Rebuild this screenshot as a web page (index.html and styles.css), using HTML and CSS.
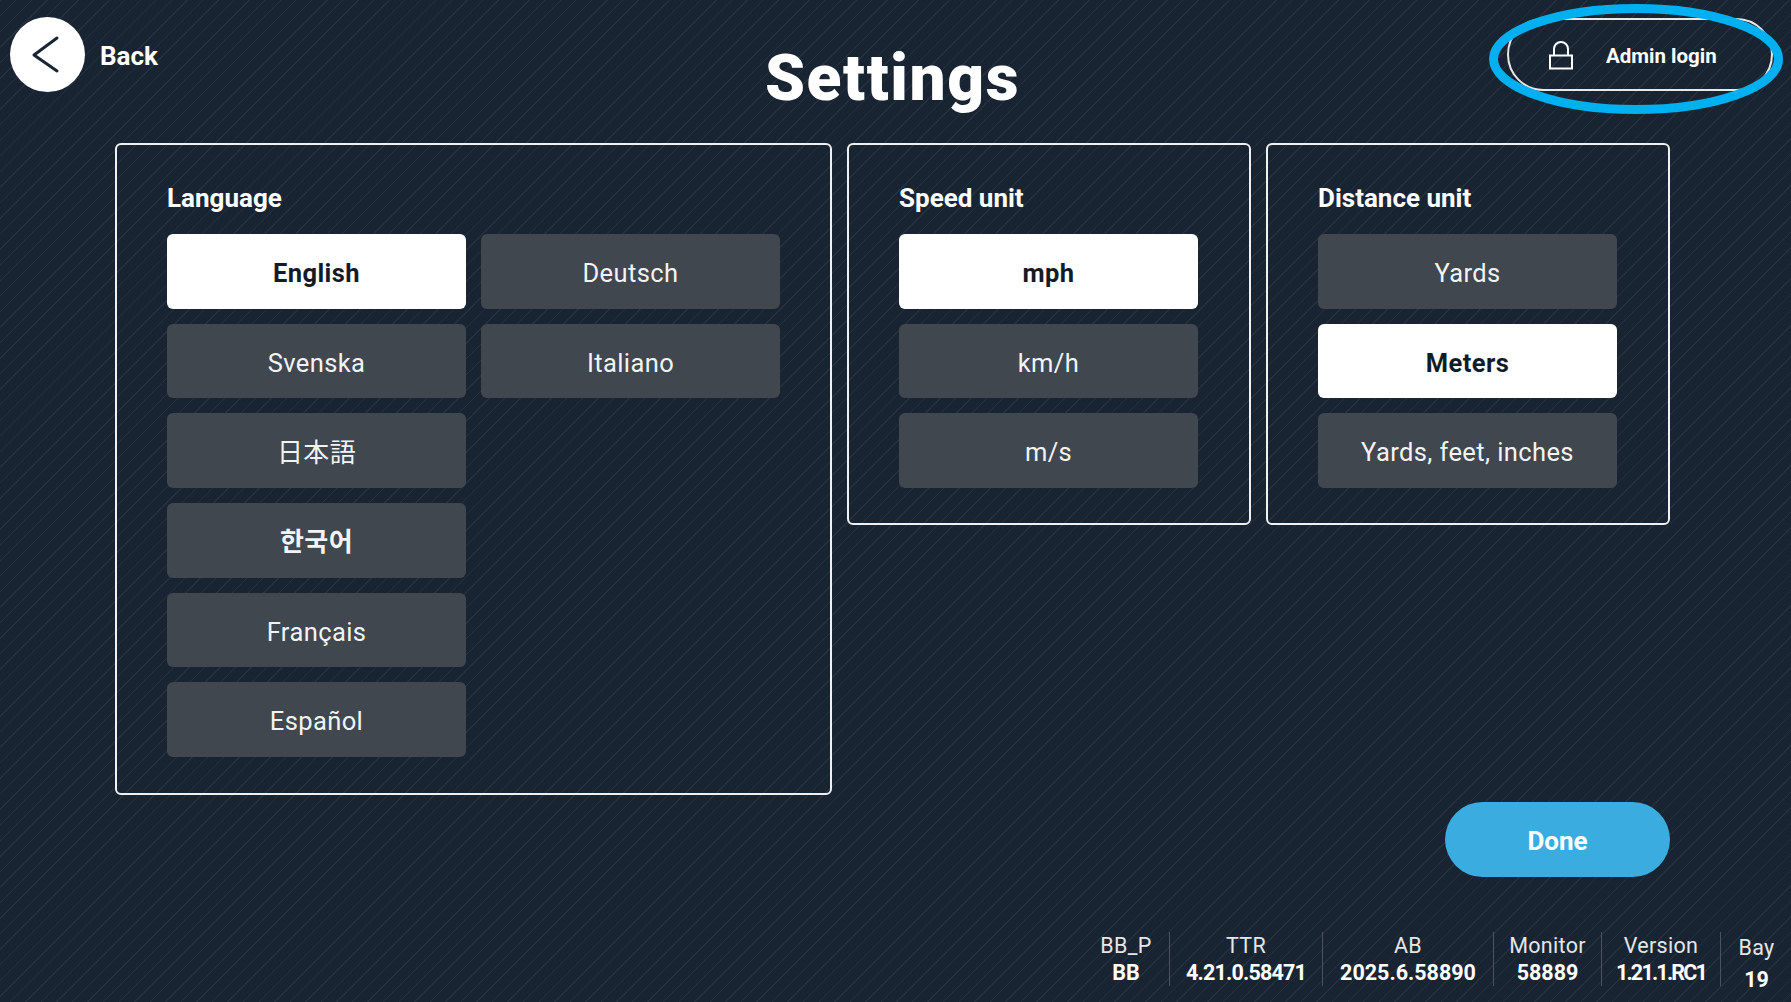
FILE: index.html
```html
<!DOCTYPE html>
<html lang="en">
<head>
<meta charset="utf-8">
<title>Settings</title>
<link rel="stylesheet" href="styles.css">
</head>
<body>
<div class="screen">
  <header class="top">
    <div class="back">
      <span class="back-circle">
        <svg width="75" height="75" viewBox="0 0 75 75"><path d="M47 21 L24 38 L47 54" fill="none" stroke="#1a2533" stroke-width="3" stroke-linecap="round" stroke-linejoin="round"/></svg>
      </span>
      <span class="back-label">Back</span>
    </div>
    <h1 class="title">Settings</h1>
    <div class="admin">
      <svg class="lock" width="26" height="30" viewBox="0 0 26 30"><path d="M6 15.5 V9 a7 7 0 0 1 14 0 V15.5" fill="none" stroke="#fff" stroke-width="2"/><rect x="2" y="15.5" width="22" height="13" fill="none" stroke="#fff" stroke-width="2"/></svg>
      <span class="admin-label">Admin login</span>
    </div>
  </header>
  <svg class="highlight" width="294" height="110" viewBox="0 0 294 110"><ellipse cx="147" cy="55" rx="142.5" ry="50.5" fill="none" stroke="#00b0f0" stroke-width="9"/></svg>

  <main class="panels">
    <section class="panel panel-lang">
      <h2 class="panel-title">Language</h2>
      <div class="lang-grid">
        <div class="col">
          <div class="opt on">English</div>
          <div class="opt">Svenska</div>
          <div class="opt cjk">日本語</div>
          <div class="opt cjk ko">한국어</div>
          <div class="opt">Français</div>
          <div class="opt">Español</div>
        </div>
        <div class="col">
          <div class="opt">Deutsch</div>
          <div class="opt">Italiano</div>
        </div>
      </div>
    </section>
    <section class="panel">
      <h2 class="panel-title">Speed unit</h2>
      <div class="col">
        <div class="opt on">mph</div>
        <div class="opt">km/h</div>
        <div class="opt">m/s</div>
      </div>
    </section>
    <section class="panel">
      <h2 class="panel-title">Distance unit</h2>
      <div class="col">
        <div class="opt">Yards</div>
        <div class="opt on">Meters</div>
        <div class="opt">Yards, feet, inches</div>
      </div>
    </section>
  </main>

  <div class="actions"><div class="done">Done</div></div>

  <footer class="info">
    <div class="cell"><span>BB_P</span><b>BB</b></div>
    <div class="cell"><span>TTR</span><b class="narrow">4.21.0.58471</b></div>
    <div class="cell"><span>AB</span><b>2025.6.58890</b></div>
    <div class="cell"><span>Monitor</span><b>58889</b></div>
    <div class="cell"><span>Version</span><b class="narrower">1.21.1.RC1</b></div>
    <div class="cell bay"><span>Bay</span><b>19</b></div>
  </footer>
</div>
</body>
</html>
```
FILE: styles.css
```css
* { box-sizing: border-box; }
html, body { margin: 0; height: 100%; }
body {
  font-family: Roboto, "Noto Sans CJK JP", sans-serif;
  color: #fff;
  background-color: #192432;
  overflow: hidden;
}
.screen {
  position: relative;
  width: 1791px;
  height: 1002px;
  display: flex;
  flex-direction: column;
  background-color: #192432;
  background-image: repeating-linear-gradient(135deg, rgba(255,255,255,0.06) 0 1px, transparent 1px 11px);
}
.top {
  height: 143px;
  display: grid;
  grid-template-columns: 1fr auto 1fr;
  align-items: start;
  padding: 17px 18px 0 10px;
}
.back { display: flex; align-items: center; gap: 15px; }
.back-circle {
  width: 75px; height: 75px; border-radius: 50%;
  background: #fff; display: block;
}
.back-circle svg { display: block; }
.back-label { font-size: 26px; font-weight: 700; padding-top: 2px; }
.title {
  margin: 24px 0 0 2px;
  font-size: 64px;
  line-height: 76px;
  font-weight: 900;
  letter-spacing: 1.6px;
}
.admin {
  justify-self: end;
  width: 266px; height: 73px;
  margin-top: 1px;
  border: 2px solid #e8e8e8;
  border-radius: 37px;
  display: flex; align-items: center;
  padding-left: 39px;
  gap: 32px;
}
.lock { display: block; }
.admin-label { font-size: 20.5px; font-weight: 700; padding-top: 2px; }
.highlight { position: absolute; left: 1489px; top: 4px; }
.panels {
  height: 652px;
  padding-left: 115px;
  display: flex;
  align-items: flex-start;
  gap: 15px;
}
.panel {
  width: 404px;
  border: 2px solid #f0f0f0;
  border-radius: 6px;
  padding: 37px 50px 35px;
}
.panel-lang { width: 717px; height: 652px; }
.panel-title { margin: 0 0 19px; font-size: 26px; line-height: 33px; font-weight: 700; }
.lang-grid { display: flex; gap: 15px; }
.col { display: flex; flex-direction: column; gap: 15px; width: 299px; }
.opt {
  height: 74.7px;
  border-radius: 6px;
  background: #40474f;
  display: flex; align-items: center; justify-content: center;
  font-size: 25.5px;
  letter-spacing: .4px;
  padding-top: 3px;
  color: #f2f3f4;
}
.opt.on { background: #fff; color: #131c26; font-weight: 700; }
.cjk { font-family: "Noto Sans CJK JP", sans-serif; padding-top: 0; font-size: 26px; }
.ko { font-family: "Noto Sans CJK KR", sans-serif; font-weight: 700; padding-bottom: 2px; }
.actions { height: 75px; margin-top: 7px; padding-right: 121px; display: flex; justify-content: flex-end; }
.done {
  width: 225px; height: 75px; border-radius: 38px;
  background: #3aace0;
  display: flex; align-items: center; justify-content: center;
  font-size: 26px; font-weight: 700;
  padding-top: 2px;
}
.info {
  position: absolute;
  left: 1083px; bottom: 0;
  height: 70px;
  display: grid;
  grid-template-columns: 86px 153px 171px 108px 119px 72px;
  align-items: start;
}
.cell {
  height: 54px;
  border-left: 1px solid #4a535d;
  display: flex; flex-direction: column; align-items: center;
  font-size: 21.5px; line-height: 27px;
  color: #e4e6e8;
}
.cell span { letter-spacing: .3px; }
.cell:first-child { border-left: 0; }
.cell b { color: #fff; font-weight: 700; white-space: nowrap; }
.narrow { letter-spacing: -.8px; }
.narrower { letter-spacing: -1.8px; }
.bay { padding-top: 2px; }
.bay b { margin-top: 5px; }
```
